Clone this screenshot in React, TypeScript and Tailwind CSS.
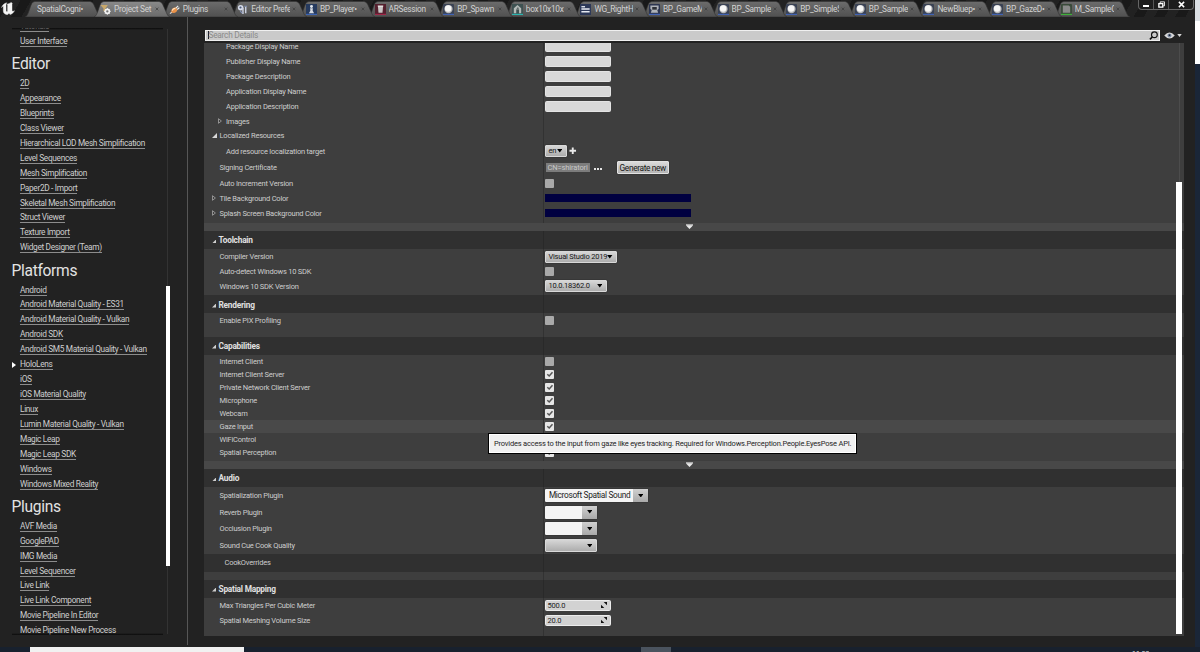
import type { ReactNode } from "react";
import clsx from "clsx";

type TabIcon = "none" | "settings" | "plugin" | "prefs" | "pawn" | "session" | "sphere" | "mesh" | "widget" | "mode" | "material";

const TABS: { title: string; icon: TabIcon }[] = [
  { title: "SpatialCogni•", icon: "none" },
  { title: "Project Set", icon: "settings" },
  { title: "Plugins", icon: "plugin" },
  { title: "Editor Prefe", icon: "prefs" },
  { title: "BP_Player•", icon: "pawn" },
  { title: "ARSession", icon: "session" },
  { title: "BP_Spawn", icon: "sphere" },
  { title: "box10x10x", icon: "mesh" },
  { title: "WG_RightH", icon: "widget" },
  { title: "BP_GameM", icon: "mode" },
  { title: "BP_Sample", icon: "sphere" },
  { title: "BP_SimpleS", icon: "sphere" },
  { title: "BP_Sample", icon: "sphere" },
  { title: "NewBluep•", icon: "sphere" },
  { title: "BP_GazeD•", icon: "sphere" },
  { title: "M_SampleC", icon: "material" },
];

const SIDEBAR: { heading?: string; items: string[] }[] = [
  { items: ["Tutorials", "User Interface"] },
  {
    heading: "Editor",
    items: [
      "2D",
      "Appearance",
      "Blueprints",
      "Class Viewer",
      "Hierarchical LOD Mesh Simplification",
      "Level Sequences",
      "Mesh Simplification",
      "Paper2D - Import",
      "Skeletal Mesh Simplification",
      "Struct Viewer",
      "Texture Import",
      "Widget Designer (Team)",
    ],
  },
  {
    heading: "Platforms",
    items: [
      "Android",
      "Android Material Quality - ES31",
      "Android Material Quality - Vulkan",
      "Android SDK",
      "Android SM5 Material Quality - Vulkan",
      "HoloLens",
      "iOS",
      "iOS Material Quality",
      "Linux",
      "Lumin Material Quality - Vulkan",
      "Magic Leap",
      "Magic Leap SDK",
      "Windows",
      "Windows Mixed Reality",
    ],
  },
  {
    heading: "Plugins",
    items: [
      "AVF Media",
      "GooglePAD",
      "IMG Media",
      "Level Sequencer",
      "Live Link",
      "Live Link Component",
      "Movie Pipeline In Editor",
      "Movie Pipeline New Process",
    ],
  },
];

function TabGlyph({ icon }: { icon: TabIcon }) {
  switch (icon) {
    case "settings":
      return (
        <svg viewBox="0 0 12 12" className="size-[11px]">
          <path d="M.5 1h8L6 5v3.500L3.800 7.500V5z" fill="#c9a86a" />
          <circle cx="8" cy="8" r="2.200" fill="none" stroke="#f2f2f2" strokeWidth="1.800" />
          <path d="M8 4.300v1.200M8 10.500v1.200M4.300 8h1.200M10.500 8h1.200M5.500 5.500l.8.8M10.500 5.500l-.8.8M5.500 10.500l.8-.8M10.500 10.500l-.8-.8" stroke="#f2f2f2" />
        </svg>
      );
    case "plugin":
      return (
        <svg viewBox="0 0 12 12" className="size-[11px]">
          <path d="M1 10.500l2.500-1.800" stroke="#ddd" strokeWidth="1.200" />
          <path d="M2.500 9C2 5.500 4.500 3.500 7.600 3.700l1.600 2.200C8.800 9 5.600 11 2.500 9z" fill="#e8924a" />
          <path d="M3.500 7.200C4 5.500 5.500 4.700 7 4.800" stroke="#ffe6c4" strokeWidth="1.300" fill="none" />
          <path d="M7.500 4.500L10 2M9 6l2.300-2" stroke="#eee" strokeWidth="1.300" />
        </svg>
      );
    case "prefs":
      return (
        <svg viewBox="0 0 12 12" className="size-[11px]">
          <circle cx="4" cy="4" r="3" fill="#d6dcea" />
          <circle cx="3.800" cy="3.800" r="1.200" fill="#4a5878" />
          <path d="M6.500 4v7M9.500 3v7" stroke="#c9cfdf" strokeWidth="1.600" />
          <path d="M3.500 7.500l2 2.500M8 2.500h3" stroke="#8090b8" strokeWidth="1.200" />
        </svg>
      );
    case "pawn":
      return (
        <svg viewBox="0 0 12 12" className="size-[11px]">
          <rect width="12" height="12" fill="#263a5e" />
          <rect y="10.700" width="12" height="1.300" fill="#3b64b4" />
          <circle cx="6" cy="2.700" r="1.600" fill="#e4e8ee" />
          <path d="M4.400 4.700h3.200L7.200 7.200 8.800 10H3.200l1.600-2.800z" fill="#d4d9e0" />
        </svg>
      );
    case "session":
      return (
        <svg viewBox="0 0 12 12" className="size-[11px]">
          <rect width="12" height="12" fill="#54202e" />
          <rect y="10.700" width="12" height="1.300" fill="#a02848" />
          <path d="M3.200 2.200h5.600l-.6 7.300H3.800z" fill="#c9c5c5" />
          <path d="M3 2.200h6" stroke="#fff" />
        </svg>
      );
    case "sphere":
      return (
        <svg viewBox="0 0 12 12" className="size-[11px]">
          <rect width="12" height="12" rx="1" fill="#3a4254" />
          <rect y="10.700" width="12" height="1.300" fill="#4263b4" />
          <circle cx="6" cy="5.500" r="4.500" fill="#b9b9b9" />
          <circle cx="5.600" cy="4.900" r="3.500" fill="#f6f6f6" />
        </svg>
      );
    case "mesh":
      return (
        <svg viewBox="0 0 12 12" className="size-[11px]">
          <rect width="12" height="12" fill="#3f5252" />
          <rect y="10.700" width="12" height="1.300" fill="#2bb5b0" />
          <path d="M2 10V4.500L6 1l4 3.500V10H7.700V6H4.600v4z" fill="#b4bab8" />
          <path d="M4.600 6L6.500 3l1.200 3" fill="#5b6665" />
        </svg>
      );
    case "widget":
      return (
        <svg viewBox="0 0 12 12" className="size-[11px]">
          <rect width="12" height="12" fill="#2c3858" />
          <path d="M1.500 3h4" stroke="#e6eaf2" strokeWidth="1.500" />
          <path d="M1.500 5.500h9M1.500 8.500h9" stroke="#e6eaf2" strokeWidth="1.500" />
        </svg>
      );
    case "mode":
      return (
        <svg viewBox="0 0 12 12" className="size-[11px]">
          <rect width="12" height="12" rx="1" fill="#2c3550" />
          <rect y="10.700" width="12" height="1.300" fill="#4263b4" />
          <path d="M1.500 1.500h9v4L9 6.500l1 3H2l1-3-1.500-1z" fill="#aeb2b8" />
          <path d="M3.500 3.300h5v2.900h-5z" fill="#2e3138" />
        </svg>
      );
    case "material":
      return (
        <svg viewBox="0 0 12 12" className="size-[11px]">
          <rect width="12" height="12" rx="1" fill="#3a4a3a" />
          <rect y="10.700" width="12" height="1.300" fill="#3fae3a" />
          <path d="M2 1.500h6.500L10 3v6.500H2z" fill="#8a8a8a" />
        </svg>
      );
    default:
      return null;
  }
}

function Tab({ title, icon, index }: { title: string; icon: TabIcon; index: number }) {
  const active = index === 1;
  return (
    <div
      className="relative -mr-[7.400px] flex h-4 w-[76px] shrink-0 items-center"
      style={{ zIndex: active ? 30 : 20 - index }}
    >
      <svg viewBox="0 0 76 16" className="absolute inset-0 h-4 w-[76px]" preserveAspectRatio="none">
        <defs>
          <linearGradient id={"tab" + index} x1="0" y1="0" x2="0" y2="1">
            <stop offset="0" stopColor={active ? "#8a8a8a" : "#6c6c6c"} />
            <stop offset="1" stopColor={active ? "#6a6a6a" : "#505050"} />
          </linearGradient>
        </defs>
        <path d="M0 16C4 15 5 3 8 1.200Q9 .5 10 .5H65Q67 .5 68.500 3L73 13Q74 15.500 76 16Z" fill={`url(#tab${index})`} stroke="#333" strokeWidth=".6" />
      </svg>
      <div className={clsx("relative flex w-full items-center", icon === "none" ? "pl-3" : "pl-[6.500px]")}>
        {icon !== "none" && <TabGlyph icon={icon} />}
        <span
          className={clsx(
            "-mt-px overflow-hidden text-[8.300px] leading-3 tracking-[-0.280px] whitespace-nowrap text-[#d2d2d2]",
            icon === "none" ? "w-[50px]" : "ml-[3px] w-[39px]",
          )}
        >
          {title}
        </span>
        {icon !== "none" && (
          <svg viewBox="0 0 6 6" className="ml-[2px] size-[4px]">
            <path d="M1 1l4 4M5 1L1 5" stroke="#3c3c3c" strokeWidth="1.100" />
          </svg>
        )}
      </div>
    </div>
  );
}

function TitleBar() {
  return (
    <div className="flex h-[17px] shrink-0 items-start bg-[repeating-linear-gradient(120deg,#191919_0_9px,#222_9px_18px)]">
      <div className="flex h-[17px] w-[25px] shrink-0 items-center pl-px">
        <svg viewBox="0 0 14 13" className="mt-[-1px] h-[13px] w-[14px]">
          <path
            d="M.5 5.500C1.500 3 3.500 1 6 .8 5 1.600 5 2.500 5 3.500v5c0 1 .8 1.500 1.600.8V3.200C6.600 2.500 6 2.400 5.800 2.200 7.500 1.800 9 1.500 10 .5c2 .6 1 1 1 2v6c0 .8.800 1.200 2.500.2C12.500 10.500 11 12 9 12.500L8 11.300 6.300 12.800C4 12.500 2.300 11 2.300 9V4.800C2.300 4 1.500 4.300.5 5.500z"
            fill="#f4f4f4"
            stroke="#f4f4f4"
            strokeWidth=".4"
          />
        </svg>
      </div>
      <div className="flex flex-1 pt-px">
        {TABS.map((tab, i) => (
          <Tab key={i} index={i} {...tab} />
        ))}
      </div>
      <div className="mr-px flex h-[9.500px] w-[56px] shrink-0 items-center rounded-b-sm border border-t-0 border-[#666] bg-[#1d1d1d]">
        <div className="flex h-full w-[15px] items-center justify-center border-r border-[#555]">
          <div className="mt-[3px] h-[2px] w-[6px] bg-white" />
        </div>
        <div className="flex h-full w-[15px] items-center justify-center border-r border-[#555]">
          <svg viewBox="0 0 8 8" className="size-[7px]">
            <path d="M2.500 2.500V1h5v4.500H6" fill="none" stroke="#fff" />
            <path d="M1 3h4.500v4H1z" fill="none" stroke="#fff" strokeWidth="1.500" />
          </svg>
        </div>
        <div className="flex h-full flex-1 items-center justify-center">
          <svg viewBox="0 0 8 8" className="size-[7px]">
            <path d="M1 1l6 6M7 1L1 7" stroke="#fff" strokeWidth="1.700" />
          </svg>
        </div>
      </div>
    </div>
  );
}

function Sidebar() {
  return (
    <div className="flex w-[188px] shrink-0 border-r border-[#565656] pt-[11px] pb-[10px]">
      <div className="relative ml-[11.500px] h-[607px] w-[151px] overflow-hidden">
        <div className="-mt-[8.500px]">
          {SIDEBAR.map((group, g) => (
            <div key={g}>
              {group.heading && (
                <div className="flex h-[27.350px] items-center pt-[4px] text-[15.600px] leading-none tracking-[-0.320px] text-[#e2e2e2]">{group.heading}</div>
              )}
              {group.items.map((item) => (
                <div key={item} className="flex h-[14.930px] items-center">
                  <div className="w-[8.500px] pl-[0.500px]">
                    {item === "HoloLens" && (
                      <svg viewBox="0 0 4 6" className="h-[6px] w-[4px]">
                        <path d="M0 0l4 3-4 3z" fill="#fff" />
                      </svg>
                    )}
                  </div>
                  <span className="border-b border-[#8c8c8c] text-[8.300px] leading-[9px] tracking-[-0.330px] whitespace-nowrap text-[#cecece]">{item}</span>
                </div>
              ))}
            </div>
          ))}
        </div>
        <div className="absolute inset-x-0 top-0 h-[2px] bg-gradient-to-b from-black/70 to-transparent" />
        <div className="absolute inset-x-0 bottom-0 h-[2px] bg-gradient-to-t from-black/70 to-transparent" />
      </div>
      <div className="ml-[2.500px] flex w-[5px] flex-col items-center pt-px">
        <div className="h-[257px] w-px bg-[#333]" />
        <div className="h-[280px] w-[4px] bg-white" />
        <div className="h-[68px] w-px bg-[#333]" />
      </div>
    </div>
  );
}

function Caret() {
  return (
    <svg viewBox="0 0 6 4" className="h-[3.500px] w-[5.500px] shrink-0">
      <path d="M0 0h6L3 4z" fill="#000" />
    </svg>
  );
}

function Arrow({ open }: { open: boolean }) {
  return open ? (
    <svg viewBox="0 0 5 5" className="size-[5px] shrink-0">
      <path d="M5 0v5H0z" fill="#d8d8d8" />
    </svg>
  ) : (
    <svg viewBox="0 0 4 6" className="h-[6px] w-[4px] shrink-0">
      <path d="M.5.7L3.400 3 .5 5.300z" fill="none" stroke="#b5b5b5" strokeWidth=".7" />
    </svg>
  );
}

function Row({
  label,
  height,
  indent = "pl-[15.500px]",
  arrow,
  hover,
  dark,
  children,
}: {
  label?: string;
  height: string;
  indent?: string;
  arrow?: "open" | "closed";
  hover?: boolean;
  dark?: boolean;
  children?: ReactNode;
}) {
  return (
    <div className={clsx("flex shrink-0", height, hover && "bg-[#494949]", dark && "bg-[#303030]")}>
      <div className={clsx("flex w-[340px] shrink-0 items-center border-r", arrow ? "" : indent, dark ? "border-[#292929]" : "border-[#323232]")}>
        {arrow && (
          <div className={clsx("flex shrink-0 items-center", indent === "pl-[22px]" ? "w-[22px] pl-[14px]" : "w-[15.500px] pl-[8px]")}>
            <Arrow open={arrow === "open"} />
          </div>
        )}
        {label && <span className="text-[7.500px] leading-[9px] tracking-[-0.220px] whitespace-nowrap text-[#cdcdcd]">{label}</span>}
      </div>
      <div className="flex flex-1 items-center pl-px">{children}</div>
    </div>
  );
}

function Header({ title }: { title: string }) {
  return (
    <div className="flex h-[18px] shrink-0 bg-[#303030]">
      <div className="flex w-[340px] items-center border-r border-[#292929] pt-px pl-[7.500px]">
        <svg viewBox="0 0 5 5" className="mt-px size-[4.500px]">
          <path d="M5 0v5H0z" fill="#d0d0d0" />
        </svg>
        <span className="ml-[2.500px] text-[8.300px] leading-none font-bold tracking-[-0.220px] text-[#e0e0e0]">{title}</span>
      </div>
    </div>
  );
}

function Band() {
  return (
    <div className="flex h-2 shrink-0 items-start justify-center bg-[#484848] pr-[10px]">
      <svg viewBox="0 0 7 6" className="mt-px h-[5.500px] w-[7px]">
        <path d="M0 0h7v2L3.500 5.500 0 2z" fill="#eaeaea" />
        <path d="M0 0h7v1.500H0z" fill="#a8a8a8" />
      </svg>
    </div>
  );
}

function Check({ on }: { on?: boolean }) {
  return (
    <div className={clsx("ml-[0.400px] flex size-[9px] items-center justify-center rounded-[1px]", on ? "bg-[#e6e6e6]" : "bg-[#a9a9a9]")}>
      {on && (
        <svg viewBox="0 0 8 8" className="size-[8px]">
          <path d="M1.300 4.200L3.200 6 6.500 2.200" fill="none" stroke="#555" strokeWidth="1.500" />
        </svg>
      )}
    </div>
  );
}

function TextBox() {
  return <div className="h-[11px] w-[66px] rounded-[1.500px] border border-[#e4e4e4] bg-[#d8d8d8]" />;
}

function Button({ width, children }: { width: string; children?: ReactNode }) {
  return (
    <div
      className={clsx(
        "ml-[0.400px] flex h-[12.500px] items-center justify-between rounded-[1px] border border-[#d8d8d8] bg-gradient-to-b from-[#d6d6d6] to-[#adadad] pr-[3.500px] pl-[2px] text-[7.500px] leading-none tracking-[-0.200px] whitespace-nowrap text-[#161616] shadow-[0_0_1px_#000]",
        width,
      )}
    >
      {children}
    </div>
  );
}

function Combo({ width, children }: { width: string; children?: ReactNode }) {
  return (
    <div className={clsx("ml-[0.400px] flex h-[13px] rounded-[1px] bg-[#f4f4f4] shadow-[0_0_1px_#000]", width)}>
      <div className="flex min-w-0 flex-1 items-center pl-[3.500px] text-[8.300px] leading-none tracking-[-0.310px] whitespace-nowrap text-[#1c1c1c]">{children}</div>
      <div className="flex w-[14.500px] shrink-0 items-center justify-center bg-gradient-to-b from-[#cfcfcf] to-[#a9a9a9]">
        <Caret />
      </div>
    </div>
  );
}

function Spin({ value }: { value: string }) {
  return (
    <div className="flex h-[11px] w-[66px] items-center justify-between rounded-[1.500px] border border-[#ececec] bg-[#d2d2d2] pr-[3px] pl-[1.500px]">
      <span className="text-[7.500px] leading-none tracking-[-0.200px] text-[#222]">{value}</span>
      <svg viewBox="0 0 6 6" className="size-[6px]">
        <path d="M2.700 0H6v3.300zM0 2.700V6h3.300z" fill="#111" />
      </svg>
    </div>
  );
}

function ColorBar() {
  return <div className="h-2 w-[146px] bg-[#000040]" />;
}

function SearchBar() {
  return (
    <div className="flex h-[11px] shrink-0 items-center">
      <div className="ml-px flex h-[11px] w-[954.500px] items-center justify-between border border-[#f0f0f0] bg-[#cacaca] pr-px pl-[1.500px]">
        <div className="flex items-center">
          <div className="h-2 w-px bg-[#222]" />
          <span className="text-[8.300px] leading-none tracking-[-0.250px] text-[#8b8b8b]">Search Details</span>
        </div>
        <svg viewBox="0 0 10 10" className="size-[9px]">
          <circle cx="6" cy="4.200" r="3.200" fill="none" stroke="#111" strokeWidth="1.300" />
          <path d="M3.800 6.500L1 9.300" stroke="#111" strokeWidth="1.700" />
        </svg>
      </div>
      <svg viewBox="0 0 12 8" className="ml-1 h-[7px] w-[11px]">
        <path d="M0 4Q6-3 12 4 6 11 0 4z" fill="#d8d8d8" />
        <circle cx="6" cy="4" r="2.300" fill="#7d8ba4" />
        <circle cx="6" cy="3.700" r="1" fill="#1c2430" />
      </svg>
      <svg viewBox="0 0 6 4" className="ml-[2px] h-[3px] w-[5px]">
        <path d="M0 0h6L3 4z" fill="#d8d8d8" />
      </svg>
    </div>
  );
}

function Details() {
  return (
    <div className="relative mt-[2px] flex h-[593px] w-[980px] flex-col overflow-hidden bg-[#3e3e3e]">
      <div className="-mt-[3.600px] flex flex-col">
        {["Package Display Name", "Publisher Display Name", "Package Description", "Application Display Name", "Application Description"].map((label) => (
          <Row key={label} label={label} height="h-[14.900px]" indent="pl-[22px]">
            <TextBox />
          </Row>
        ))}
        <Row label="Images" height="h-[14.600px]" indent="pl-[22px]" arrow="closed" />
        <Row label="Localized Resources" height="h-[14.400px]" arrow="open" />
        <Row label="Add resource localization target" height="h-[16.400px]" indent="pl-[22px]">
          <Button width="w-[21.500px]">
            en
            <Caret />
          </Button>
          <svg viewBox="0 0 8 8" className="ml-[2.500px] size-[7.500px]">
            <path d="M4 .5v7M.5 4h7" stroke="#e8e8e8" strokeWidth="2" />
          </svg>
        </Row>
        <Row label="Signing Certificate" height="h-[17px]">
          <div className="ml-[0.500px] flex h-[9.500px] w-[44.500px] items-center bg-[#7c7c7c] pl-[2px] text-[7.500px] leading-none tracking-[-0.120px] whitespace-nowrap text-[#c8c8c8]">
            CN=shiratori
          </div>
          <svg viewBox="0 0 8 2" className="mt-[3px] ml-1 h-[2px] w-[8px]">
            <path d="M0 0h2v2H0zM3 0h2v2H3zM6 0h2v2H6z" fill="#e4e4e4" />
          </svg>
          <div className="ml-[14.500px] flex h-[13px] w-[52.500px] items-center justify-center rounded-[1px] border border-[#e2e2e2] bg-gradient-to-b from-[#dadada] to-[#b4b4b4] text-[8.300px] leading-none tracking-[-0.350px] whitespace-nowrap text-[#161616] shadow-[0_0_1px_#000]">
            Generate new
          </div>
        </Row>
        <Row label="Auto Increment Version" height="h-[14.800px]">
          <Check />
        </Row>
        <Row label="Tile Background Color" height="h-[14.900px]" arrow="closed">
          <ColorBar />
        </Row>
        <Row label="Splash Screen Background Color" height="h-[14.900px]" arrow="closed">
          <ColorBar />
        </Row>
        <Row height="h-[2.100px]" />
        <Band />

        <Header title="Toolchain" />
        <Row label="Compiler Version" height="h-[16px]">
          <Button width="w-[72px]">
            Visual Studio 2019
            <Caret />
          </Button>
        </Row>
        <Row label="Auto-detect Windows 10 SDK" height="h-[13px]">
          <Check />
        </Row>
        <Row label="Windows 10 SDK Version" height="h-[16.600px]">
          <Button width="w-[61.500px]">
            10.0.18362.0
            <Caret />
          </Button>
        </Row>
        <Row height="h-[0.900px]" />

        <Header title="Rendering" />
        <Row label="Enable PIX Profiling" height="h-[15.200px]">
          <Check />
        </Row>
        <Row height="h-[8px]" />

        <Header title="Capabilities" />
        {["Internet Client", "Internet Client Server", "Private Network Client Server", "Microphone", "Webcam", "Gaze Input", "WiFiControl", "Spatial Perception"].map((label) => (
          <Row key={label} label={label} height="h-[13.050px]" hover={label === "Gaze Input"}>
            <Check on={label !== "Internet Client"} />
          </Row>
        ))}
        <Row height="h-[1.900px]" />
        <Band />

        <Header title="Audio" />
        <Row label="Spatialization Plugin" height="h-[17px]">
          <Combo width="w-[102.500px]">Microsoft Spatial Sound</Combo>
        </Row>
        <Row label="Reverb Plugin" height="h-[16.800px]">
          <Combo width="w-[51.500px]" />
        </Row>
        <Row label="Occlusion Plugin" height="h-[16.700px]">
          <Combo width="w-[51.500px]" />
        </Row>
        <Row label="Sound Cue Cook Quality" height="h-[16.400px]">
          <Button width="w-[51.500px]">
            <span />
            <Caret />
          </Button>
        </Row>
        <Row label="CookOverrides" height="h-[18px]" indent="pl-[20.500px]" dark />
        <Row height="h-[8px]" />

        <Header title="Spatial Mapping" />
        <Row label="Max Triangles Per Cubic Meter" height="h-[15.100px]">
          <Spin value="500.0" />
        </Row>
        <Row label="Spatial Meshing Volume Size" height="h-[14.900px]">
          <Spin value="20.0" />
        </Row>
        <Row height="h-[8px]" />
      </div>

      <div className="absolute inset-y-0 right-[2px] flex w-[6px] flex-col items-center">
        <div className="h-[139px] w-px bg-[#4c4c4c]" />
        <div className="h-[452px] w-[6px] bg-white" />
      </div>
      <div className="absolute top-[389.500px] left-[284px] flex h-[21.500px] w-[369px] items-center border border-black bg-[#f0f0f0] pl-[5px] text-[7.500px] leading-none tracking-[-0.190px] whitespace-nowrap text-[#1e1e1e] shadow-[inset_0_0_0_1px_#fff]">
        Provides access to the input from gaze like eyes tracking. Required for Windows.Perception.People.EyesPose API.
      </div>
    </div>
  );
}

export default function App() {
  return (
    <div className="flex h-[652px] w-[1200px] flex-col overflow-hidden bg-[#18212e] font-[Roboto,'Liberation_Sans',sans-serif]">
      <div className="flex h-[647px] shrink-0">
        <div className="flex w-[1195px] shrink-0 flex-col bg-[#222]">
          <TitleBar />
          <div className="flex h-[628px]">
            <Sidebar />
            <div className="ml-4 flex flex-col pt-[13px]">
              <SearchBar />
              <Details />
            </div>
          </div>
        </div>
        <div className="flex flex-1 flex-col bg-[#1a2638]">
          <div className="h-[21px] bg-[#dce0e5]" />
          <div className="h-[43px] bg-white" />
        </div>
      </div>
      <div className="flex h-[5px] items-start">
        <div className="ml-[30px] h-[5px] w-[214px] bg-[#f1f1f1]" />
        <div className="ml-[397px] h-[5px] w-[30px] bg-[#4a535e]" />
        <div className="ml-[461px] h-[5px] overflow-hidden pt-[3px] text-[7px] leading-[8px] text-[#e6e6e6]">11:55</div>
      </div>
    </div>
  );
}
